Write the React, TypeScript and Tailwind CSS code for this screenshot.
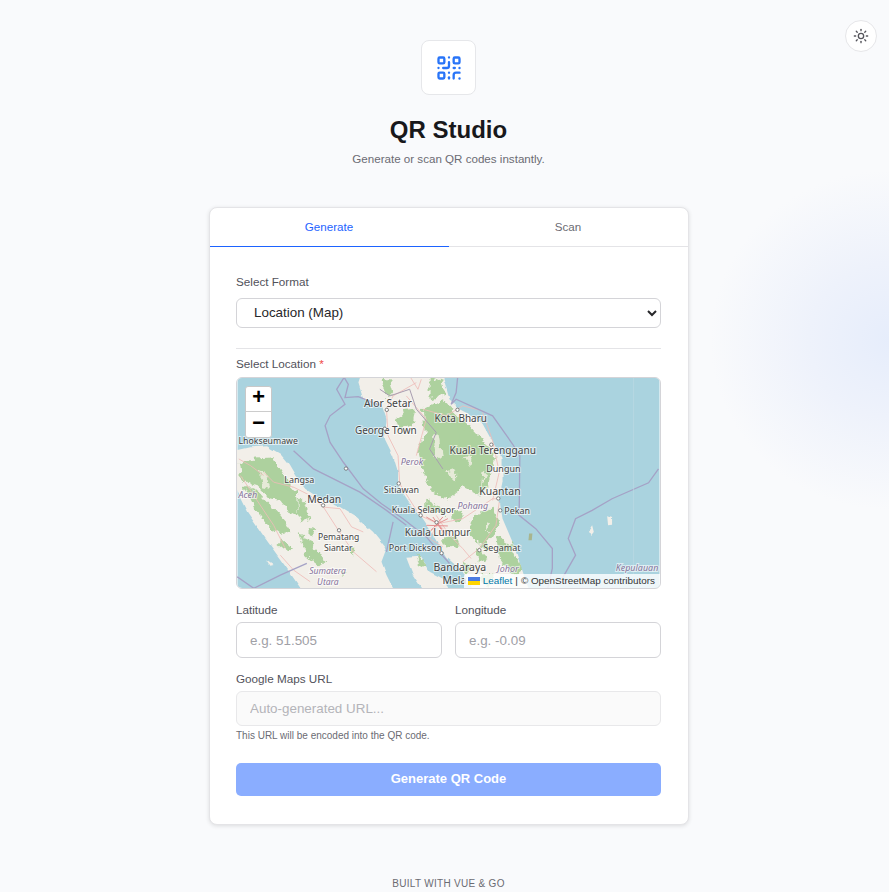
import { QrCode, Sun } from "lucide-react";

const land = [
  "M0,228 L60,215 L110,212 L150,235 L175,265 L195,300 L225,340 L270,370 L330,395 L380,425 L430,470 L470,520 L455,560 L470,600 L500,660 L225,660 L170,580 L105,490 L50,410 L15,340 L0,300 Z",
  "M392,0 L385,20 L400,70 L455,85 L470,130 L465,190 L490,240 L505,290 L505,330 L545,390 L570,420 L610,480 L650,545 L700,590 L735,660 L905,660 L850,500 L820,430 L810,370 L820,320 L820,250 L785,190 L760,145 L720,115 L690,100 L660,70 L640,0 Z",
  "M530,548 L570,545 L600,590 L640,610 L660,660 L590,660 L550,600 Z",
];
const green = [
  "M25,262 L60,250 L130,245 L150,280 L175,320 L200,350 L205,420 L175,405 L150,375 L110,365 L85,335 L50,325 L30,300 Z",
  "M40,330 L85,350 L125,395 L165,440 L185,470 L150,480 L110,450 L75,400 Z",
  "M205,365 L225,385 L240,430 L215,440 L205,410 Z",
  "M215,490 L250,505 L285,560 L265,575 L225,540 Z",
  "M235,460 L255,465 L250,478 L235,475 Z",
  "M150,490 L185,520 L170,530 L145,510 Z",
  "M355,520 L375,525 L365,540 Z",
  "M525,100 L558,95 L550,140 L510,160 L500,135 Z",
  "M455,10 L480,10 L490,45 L470,70 Z",
  "M580,100 L640,70 L700,130 L745,180 L800,235 L790,270 L780,330 L750,360 L700,335 L650,375 L610,350 L580,290 L565,230 L585,170 Z",
  "M690,155 L720,160 L730,205 L690,225 Z",
  "M600,0 L635,15 L650,60 L600,70 Z",
  "M590,370 L640,400 L650,420 L590,410 Z",
  "M735,420 L790,400 L810,450 L780,490 L770,525 L720,480 Z",
  "M800,480 L845,505 L880,590 L850,600 L810,550 Z",
  "M745,520 L775,550 L745,565 Z",
  "M680,400 L705,420 L690,440 L665,425 Z",
  "M640,490 L680,480 L690,510 L650,520 Z",
  "M330,590 L350,595 L340,605 Z",
  "M560,540 L590,565 L570,575 Z",
  "M205,470 L225,480 L215,500 Z",
  "M700,560 L725,575 L710,600 Z",
  "M760,590 L790,600 L780,640 L755,625 Z",
];
const holes = [
  "M610,180 L630,175 L640,240 L615,250 Z",
  "M700,245 L725,240 L720,270 Z",
  "M650,290 L680,280 L680,320 Z",
  "M85,280 L100,285 L120,340 L100,335 Z",
  "M770,440 L785,445 L770,470 Z",
  "M760,285 L775,295 L755,335 Z",
];
const roads = [
  "M280,395 L330,400 L365,455 L400,470",
  "M280,395 L240,360 L190,335 L130,320 L100,290",
  "M280,395 L325,465 L370,530 L440,590",
  "M100,300 L60,270 L25,250",
  "M470,100 L475,180 L505,240 L510,325 L570,420 L625,445 L700,520 L725,550",
  "M470,100 L490,60 L560,20",
  "M625,445 L700,430 L790,370 L810,370",
  "M790,375 L810,290 L790,195 L760,110",
  "M810,380 L800,450 L750,520 L700,560",
  "M625,445 L600,490 L640,515",
  "M580,100 L650,120 L700,90 L760,105",
  "M150,540 L190,585 L240,620",
  "M530,60 L590,130 L560,240",
  "M620,420 L650,465 L625,480",
  "M540,0 L565,40 L575,10",
  "M30,300 L70,360 L130,450 L165,520",
];
const cityRoads = [
  "M590,425 L625,445 L655,430",
  "M600,470 L625,445 L650,480",
  "M610,425 L640,470",
  "M640,425 L605,465",
  "M590,450 L655,452",
];
const borders = [
  "M340,0 L355,25 L345,65 L385,62 L455,90",
  "M345,0 L320,40 L345,85 L300,120 L285,150 L300,200 L340,260 L400,340 L455,385 L520,430 L590,485 L660,565",
  "M190,225 L250,280 L300,305 L390,350 L470,405 L530,450",
  "M685,0 L680,50 L665,85 L680,70 L790,120 L850,205 L872,240 L870,420 L920,460 L970,520 L970,580 L955,645",
  "M1290,280 L1260,322 L1150,370 L1090,405 L1040,430 L1018,490 L1040,540 L1000,610",
  "M20,605 L70,640 L150,600 L230,565",
  "M490,440 L470,530",
];

function MapArt() {
  const label = "fill-[#444] stroke-white/60 stroke-[2px] [paint-order:stroke] font-['Noto_Sans',sans-serif]";
  const purple = "fill-[#87759c] stroke-white/60 stroke-[2px] [paint-order:stroke] italic font-['Noto_Sans',sans-serif]";
  return (
    <svg viewBox="237 377 424 211" className="block h-full w-full">
      <defs>
        <filter id="rough" x="-5%" y="-5%" width="110%" height="110%" colorInterpolationFilters="sRGB">
          <feTurbulence type="fractalNoise" baseFrequency="0.045" numOctaves="3" seed="4" />
          <feDisplacementMap in="SourceGraphic" scale="26" xChannelSelector="R" yChannelSelector="G" />
        </filter>
        <filter id="coast" x="-5%" y="-5%" width="110%" height="110%" colorInterpolationFilters="sRGB">
          <feTurbulence type="fractalNoise" baseFrequency="0.03" numOctaves="2" seed="9" />
          <feDisplacementMap in="SourceGraphic" scale="10" xChannelSelector="R" yChannelSelector="G" />
        </filter>
      </defs>
      <rect x="237" y="377" width="424" height="211" fill="#aad3df" />
      <g transform="translate(230 375) scale(0.33333)">
        <g filter="url(#coast)">
          {land.map((d) => <path key={d} d={d} fill="#f2efe9" />)}
          <path d="M110,555 L130,570 L120,572 Z" fill="#f2efe9" />
          <path d="M1080,465 L1090,450 L1095,470 L1085,482 Z M1135,420 L1150,425 L1150,448 L1138,450 Z" fill="#f2efe9" />
        </g>
        <path d="M900,475 L910,475 L908,495 L898,495 Z" fill="#a8b58e" />
        <g filter="url(#rough)">
          {green.map((d) => <path key={d} d={d} fill="#add19e" />)}
          {holes.map((d) => <path key={d} d={d} fill="#e6ead8" />)}
        </g>
        {roads.map((d) => <path key={d} d={d} fill="none" stroke="#eebbb8" strokeWidth="2.5" />)}
        {cityRoads.map((d) => <path key={d} d={d} fill="none" stroke="#e58f8f" strokeWidth="3" />)}
        {borders.map((d) => <path key={d} d={d} fill="none" stroke="#a5a2c6" strokeWidth="4" />)}
        <path d="M1215,0 L1215,600" stroke="#bcd9e3" strokeWidth="2" fill="none" />
        <path d="M450,40 L480,60 L540,40 L560,100 L620,170 L600,220 L640,280" fill="none" stroke="#a79caf" strokeWidth="3" />
      </g>
      <g fontSize="10" className={label}>
        <text x="364" y="406" fontSize="10.4">Alor Setar</text>
        <text x="355" y="433" fontSize="10">George Town</text>
        <text x="435" y="421">Kota Bharu</text>
        <text x="450" y="453" fontSize="10.2">Kuala Terengganu</text>
        <text x="487" y="471" fontSize="9">Dungun</text>
        <text x="480" y="495" fontSize="10.5">Kuantan</text>
        <text x="505" y="514" fontSize="9">Pekan</text>
        <text x="238" y="443" fontSize="8.8">Lhokseumawe</text>
        <text x="284" y="483" fontSize="9">Langsa</text>
        <text x="307" y="503" fontSize="10.5">Medan</text>
        <text x="384" y="493" fontSize="9">Sitiawan</text>
        <text x="392" y="513" fontSize="9">Kuala Selangor</text>
        <text x="405" y="536" fontSize="10">Kuala Lumpur</text>
        <text x="389" y="551" fontSize="9">Port Dickson</text>
        <text x="318" y="540" fontSize="8.6">Pematang</text>
        <text x="324" y="551" fontSize="8.6">Siantar</text>
        <text x="484" y="551" fontSize="9">Segamat</text>
        <text x="434" y="571" fontSize="10.5">Bandaraya</text>
        <text x="443" y="584" fontSize="10.5">Mela</text>
      </g>
      <g fontSize="9" className={purple}>
        <text x="401" y="464">Perok</text>
        <text x="458" y="509">Pohang</text>
        <text x="238" y="498">Aceh</text>
        <text x="309" y="574" fontSize="8.6">Sumatera</text>
        <text x="317" y="585" fontSize="8.6">Utara</text>
        <text x="498" y="572">Johor</text>
        <text x="617" y="571">Kepulauan</text>
      </g>
      <g fill="#fff" stroke="#666" strokeWidth="0.8">
        {[[458,409],[387,409],[385,428],[346,468],[323,505],[339,530],[399,483],[421,515],[437,522],[442,553],[480,550],[499,498],[501,510],[492,444]].map(([x,y]) => (
          <circle key={`${x}-${y}`} cx={x} cy={y} r="1.7" />
        ))}
      </g>
    </svg>
  );
}

const inputCls =
  "h-[36px] w-full rounded-[6px] border border-[#d4d4d8] bg-white px-[13px] text-[13.4px] text-[#222] outline-none placeholder:text-[#a0a0a6]";

export default function App() {
  return (
    <div className="relative flex h-[892px] flex-col items-center overflow-hidden bg-[#f9fafc] pl-[8px] font-['Liberation_Sans',Arial,sans-serif]">
      <div className="absolute left-[710px] top-[170px] h-[340px] w-[360px] rounded-full bg-[radial-gradient(closest-side,#e6edfb_0%,#eef2fb_45%,#f9fafc00_100%)]" />
      <button className="absolute right-[12px] top-[20px] flex h-[32px] w-[32px] items-center justify-center rounded-full border border-[#e6e6e9] bg-white text-[#55555c]">
        <Sun size={16} strokeWidth={2} />
      </button>

      <div className="relative mt-[40px] flex h-[55px] w-[55px] items-center justify-center rounded-[8px] border border-[#e6e7ea] bg-white text-[#2874f8]">
        <QrCode size={28} strokeWidth={2} />
      </div>
      <h1 className="relative mt-[20px] text-[24px] font-bold leading-[30px] text-[#18181b]">QR Studio</h1>
      <p className="relative mt-[6px] text-[11.6px] leading-[16px] text-[#6b6b73]">Generate or scan QR codes instantly.</p>

      <main className="relative mt-[40px] w-[480px] rounded-[8px] border border-[#e4e4e7] bg-white shadow-[0_1px_4px_rgba(0,0,0,0.12)]">
        <div className="flex h-[39px] border-b border-[#e4e4e7] text-[11.6px]">
          <div className="-mb-px flex w-[239px] items-center justify-center border-b border-[#1d63ff] text-[#1d63ff]">Generate</div>
          <div className="flex flex-1 items-center justify-center text-[#6b6b73]">Scan</div>
        </div>

        <div className="px-[26.5px] pb-[28px] pt-[27px]">
          <label className="block text-[11.7px] leading-[16px] text-[#52525b]">Select Format</label>
          <select defaultValue="location" className="mt-[8px] h-[30px] w-full rounded-[6px] border border-[#d4d4d8] bg-white px-[13px] pb-[2px] text-[13.4px] text-[#27272a] outline-none">
            <option value="location">Location (Map)</option>
          </select>

          <div className="mt-[20px] h-px bg-[#e4e4e7]" />

          <label className="mt-[7px] block text-[11.7px] leading-[16px] text-[#52525b]">
            Select Location <span className="text-[#ef4444]">*</span>
          </label>
          <div className="relative mt-[5px] h-[212px] overflow-hidden rounded-[6px] border border-[#d4d4d8]">
            <MapArt />
            <div className="absolute left-[8px] top-[8px] w-[27px] overflow-hidden rounded-[3px] border border-[#c8c8c8] bg-white font-['Lucida_Console',Monaco,'Liberation_Mono',monospace] text-black">
              <div className="flex h-[25px] items-center justify-center border-b border-[#ccc] text-[22px] font-bold leading-none">+</div>
              <div className="flex h-[25px] items-center justify-center text-[22px] font-bold leading-none">−</div>
            </div>
            <div className="absolute bottom-0 right-0 flex h-[14px] items-center gap-[3px] rounded-tl-[2px] bg-white/80 pl-[4px] pr-[5px] text-[9.9px] leading-none text-[#333]">
              <svg width="12" height="8" viewBox="0 0 12 8" aria-hidden="true">
                <rect width="12" height="4" fill="#4C7BE1" />
                <rect y="4" width="12" height="4" fill="#FFD500" />
              </svg>
              <span className="text-[#0078a8]">Leaflet</span>
              <span>|</span>
              <span>© OpenStreetMap contributors</span>
            </div>
          </div>

          <div className="mt-[13px] grid grid-cols-2 gap-[13px]">
            <div>
              <label className="block text-[11.7px] leading-[16px] text-[#52525b]">Latitude</label>
              <input placeholder="e.g. 51.505" className={`${inputCls} mt-[4px]`} />
            </div>
            <div>
              <label className="block text-[11.7px] leading-[16px] text-[#52525b]">Longitude</label>
              <input placeholder="e.g. -0.09" className={`${inputCls} mt-[4px]`} />
            </div>
          </div>

          <label className="mt-[13px] block text-[11.7px] leading-[16px] text-[#52525b]">Google Maps URL</label>
          <input disabled placeholder="Auto-generated URL..." className="mt-[4px] h-[35px] w-full rounded-[6px] border border-[#e8e8ea] bg-[#fafafa] px-[13px] text-[13.4px] outline-none placeholder:text-[#b4b4b9]" />
          <p className="mt-[3px] text-[10px] leading-[14px] text-[#6b6b73]">This URL will be encoded into the QR code.</p>

          <button className="mt-[20px] h-[33px] w-full rounded-[5px] bg-[#8aadff] pb-[2px] text-[13px] font-bold text-white">Generate QR Code</button>
        </div>
      </main>

      <footer className="relative mt-[52px] text-[10px] leading-[14px] tracking-[0.3px] text-[#6b6b73]">BUILT WITH VUE &amp; GO</footer>
    </div>
  );
}
